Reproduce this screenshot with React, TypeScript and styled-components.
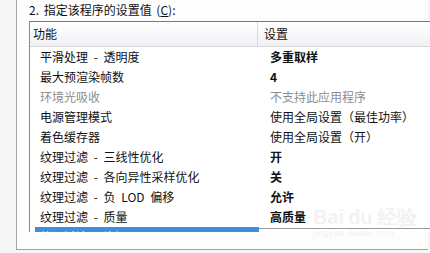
import styled, { createGlobalStyle } from 'styled-components'

const GlobalStyle = createGlobalStyle`
  html, body {
    margin: 0;
    padding: 0;
    background: #f6f6f6;
  }
  body {
    font-family: "Noto Sans CJK SC", "Noto Sans", sans-serif;
    font-size: 12px;
    color: #000000;
  }
`

type Row = {
  name: string
  value: string
  kind?: 'bold' | 'muted' | 'normal'
}

const rows: Row[] = [
  { name: '平滑处理 - 透明度', value: '多重取样', kind: 'bold' },
  { name: '最大预渲染帧数', value: '4', kind: 'bold' },
  { name: '环境光吸收', value: '不支持此应用程序', kind: 'muted' },
  { name: '电源管理模式', value: '使用全局设置（最佳功率）' },
  { name: '着色缓存器', value: '使用全局设置（开）' },
  { name: '纹理过滤 - 三线性优化', value: '开', kind: 'bold' },
  { name: '纹理过滤 - 各向异性采样优化', value: '关', kind: 'bold' },
  { name: '纹理过滤 - 负 LOD 偏移', value: '允许', kind: 'bold' },
  { name: '纹理过滤 - 质量', value: '高质量', kind: 'bold' },
]

function App() {
  return (
    <>
      <GlobalStyle />
      <Page>
        <Group>
          <Title>
            2. 指定该程序的设置值 (<u>C</u>):
          </Title>
          <ListBox>
            <Header>
              <HeadCell $first>功能</HeadCell>
              <HeadCell>设置</HeadCell>
            </Header>
            {rows.map((r) => (
              <ListRow key={r.name}>
                <NameCell $muted={r.kind === 'muted'}>{r.name}</NameCell>
                <ValueCell $kind={r.kind ?? 'normal'}>{r.value}</ValueCell>
              </ListRow>
            ))}
            <ListRow>
              <SelectedCell>纹理过滤 - 资源</SelectedCell>
              <ClippedEdge />
            </ListRow>
          </ListBox>
          <Watermark>
            Bai<WaterDu>du</WaterDu>经验
            <WaterUrl>jingyan.baidu.com</WaterUrl>
          </Watermark>
        </Group>
      </Page>
    </>
  )
}

export default App

const Page = styled.div`
  width: 430px;
  height: 253px;
  overflow: hidden;
  padding-left: 16px;
  box-sizing: border-box;
  background: #f6f6f6;
`

const Group = styled.div`
  position: relative;
  width: 412px;
  height: 250px;
  box-sizing: border-box;
  background: #fdfdfd;
  border-left: 1px solid #a3a3a3;
  border-bottom: 1px solid #a3a3a3;
  padding-left: 12px;
  display: flex;
  flex-direction: column;
`

const Title = styled.div`
  height: 22px;
  line-height: 22px;
  margin-top: -1px;
  white-space: pre;
  word-spacing: 2px;
  color: #111111;

  u {
    text-decoration: underline;
    text-underline-offset: 1px;
  }
`

const ListBox = styled.div`
  width: 410px;
  height: 211px;
  box-sizing: border-box;
  overflow: hidden;
  background: #ffffff;
  border-top: 1px solid #7a7a7a;
  border-left: 1px solid #8a8a8a;
`

const Header = styled.div`
  display: flex;
  height: 24px;
  border-bottom: 1px solid #d8d8dc;
  background: linear-gradient(#ffffff, #f1f1f4);
`

const HeadCell = styled.div<{ $first?: boolean }>`
  width: ${(p) => (p.$first ? '228px' : 'auto')};
  flex: ${(p) => (p.$first ? 'none' : '1')};
  box-sizing: border-box;
  padding-left: ${(p) => (p.$first ? '3px' : '6px')};
  line-height: 24px;
  border-right: ${(p) => (p.$first ? '1px solid #d8d8dc' : 'none')};
  color: #111111;
`

const ListRow = styled.div`
  display: flex;
  height: 20px;
  line-height: 20px;
  white-space: pre;
  word-spacing: 3px;
`

const NameCell = styled.div<{ $muted?: boolean }>`
  width: 228px;
  flex: none;
  padding-left: 10px;
  box-sizing: border-box;
  color: ${(p) => (p.$muted ? '#8c8c8c' : '#111111')};
`

const ValueCell = styled.div<{ $kind: 'bold' | 'muted' | 'normal' }>`
  flex: 1;
  padding-left: 12px;
  color: ${(p) => (p.$kind === 'muted' ? '#8c8c8c' : '#111111')};
  font-weight: ${(p) => (p.$kind === 'bold' ? 700 : 400)};
`

const SelectedCell = styled.div`
  width: 224px;
  flex: none;
  margin-left: 5px;
  padding-left: 5px;
  box-sizing: border-box;
  background: #3f8fdf;
  color: #ffffff;
`

const ClippedEdge = styled.div`
  flex: 1;
  margin-top: 1px;
  height: 0;
  border-top: 1px solid #9a9a9a;
`

const Watermark = styled.div`
  position: absolute;
  left: 296px;
  top: 206px;
  font-family: "Liberation Sans", sans-serif;
  font-size: 20px;
  font-weight: 700;
  color: rgba(210, 210, 210, 0.3);
  line-height: 22px;
  white-space: nowrap;
  pointer-events: none;
`

const WaterDu = styled.span`
  margin: 0 4px;
`

const WaterUrl = styled.div`
  font-size: 9px;
  line-height: 10px;
  font-weight: 400;
  letter-spacing: 0.5px;
`
